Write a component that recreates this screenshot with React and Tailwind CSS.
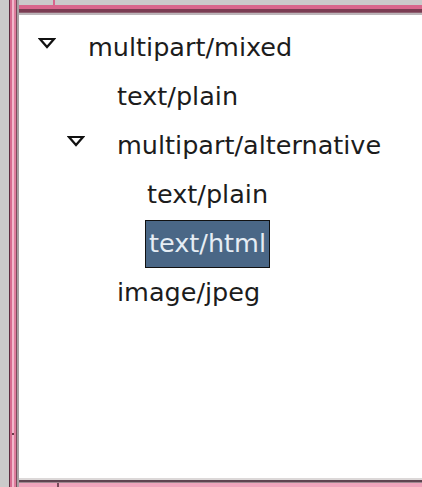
import React from "react";

const nodes = [
  { label: "multipart/mixed", level: 0, open: true },
  { label: "text/plain", level: 1 },
  { label: "multipart/alternative", level: 1, open: true },
  { label: "text/plain", level: 2 },
  { label: "text/html", level: 2, selected: true },
  { label: "image/jpeg", level: 1 },
];

function Expander() {
  return (
    <svg width="18" height="12" viewBox="0 0 18 12" className="block">
      <path d="M2 2 L16 2 L9 10 Z" fill="none" stroke="#111" strokeWidth="2.2" strokeLinejoin="miter" />
    </svg>
  );
}

function Row({ node }) {
  const indent = ["pl-[19px]", "pl-[48px]", "pl-[78px]"][node.level];
  return (
    <div className={`h-[49px] flex items-center ${indent}`}>
      <div className="w-[50px] h-full flex items-start pt-[14px]">
        {node.open ? <Expander /> : null}
      </div>
      {node.selected ? (
        <span className="-ml-[2px] h-[48px] px-[3px] flex items-center bg-[#4a6786] border border-[#111] text-[#e6edf4]">
          {node.label}
        </span>
      ) : (
        <span className="text-[#1c1c1c]">{node.label}</span>
      )}
    </div>
  );
}

export default function App() {
  return (
    <div className="w-[422px] h-[487px] bg-[#cacaca] overflow-hidden flex" style={{ fontFamily: '"DejaVu Sans", sans-serif' }}>
      <div className="w-[9px]" />
      {/* left bevelled edge of the frame */}
      <div className="h-full flex">
        <div className="w-px bg-[#5c2c3e]" />
        <div className="w-[2px] bg-[#d66c90]" />
        <div className="w-[2px] bg-[#f2b8cc] flex flex-col">
          <div className="flex-1" />
          <div className="h-[2px] bg-[#6a3848]" />
          <div className="h-[52px]" />
        </div>
        <div className="w-[2px] bg-[#de7c9c]" />
        <div className="w-px bg-[#7a4a5a]" />
        <div className="w-[2px] bg-[#a8a0a4]" />
      </div>
      <div className="flex-1 flex flex-col">
        <div className="h-[5px] flex">
          <div className="ml-[34px] w-[2px] bg-[#d8668c]" />
        </div>
        {/* top edge */}
        <div className="h-[4px] bg-[#d8668c]" />
        <div className="h-[3px] bg-[#7a3c52]" />
        <div className="h-px bg-[#8e6070]" />
        <div className="h-[2px] bg-[#bcb4b8]" />
        <div className="flex-1 bg-white pt-[8px] text-[25.5px] leading-none">
          {nodes.map((n, i) => (
            <Row key={i} node={n} />
          ))}
        </div>
        {/* bottom edge */}
        <div className="h-[2px] bg-[#dcd8d8]" />
        <div className="h-[2px] bg-[#5e4450]" />
        <div className="h-px bg-[#a08890]" />
        <div className="h-[4px] bg-[#f0a4bc] flex">
          <div className="ml-[38px] w-[2px] bg-[#7a4a5a]" />
        </div>
      </div>
    </div>
  );
}
